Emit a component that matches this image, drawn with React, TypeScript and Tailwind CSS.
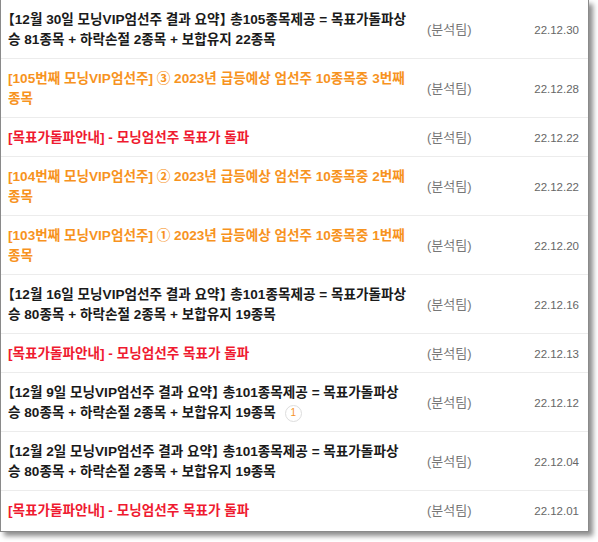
import React from "react";

type Row = {
  lines: string[];
  color: "black" | "orange" | "red";
  date: string;
  badge?: string;
};

const rows: Row[] = [
  { lines: ["【12월 30일 모닝VIP엄선주 결과 요약】 총105종목제공 = 목표가돌파상", "승 81종목 + 하락손절 2종목 + 보합유지 22종목"], color: "black", date: "22.12.30" },
  { lines: ["[105번째 모닝VIP엄선주] ③ 2023년 급등예상 엄선주 10종목중 3번째", "종목"], color: "orange", date: "22.12.28" },
  { lines: ["[목표가돌파안내] - 모닝엄선주 목표가 돌파"], color: "red", date: "22.12.22" },
  { lines: ["[104번째 모닝VIP엄선주] ② 2023년 급등예상 엄선주 10종목중 2번째", "종목"], color: "orange", date: "22.12.22" },
  { lines: ["[103번째 모닝VIP엄선주] ① 2023년 급등예상 엄선주 10종목중 1번째", "종목"], color: "orange", date: "22.12.20" },
  { lines: ["【12월 16일 모닝VIP엄선주 결과 요약】 총101종목제공 = 목표가돌파상", "승 80종목 + 하락손절 2종목 + 보합유지 19종목"], color: "black", date: "22.12.16" },
  { lines: ["[목표가돌파안내] - 모닝엄선주 목표가 돌파"], color: "red", date: "22.12.13" },
  { lines: ["【12월 9일 모닝VIP엄선주 결과 요약】 총101종목제공 = 목표가돌파상", "승 80종목 + 하락손절 2종목 + 보합유지 19종목"], color: "black", date: "22.12.12", badge: "1" },
  { lines: ["【12월 2일 모닝VIP엄선주 결과 요약】 총101종목제공 = 목표가돌파상", "승 80종목 + 하락손절 2종목 + 보합유지 19종목"], color: "black", date: "22.12.04" },
  { lines: ["[목표가돌파안내] - 모닝엄선주 목표가 돌파"], color: "red", date: "22.12.01" },
];

const colorClass = {
  black: "text-[#1a1a1a]",
  orange: "text-[#f7931e]",
  red: "text-[#ef1a30]",
};

function Line({ text }: { text: string }) {
  const parts = text.split(/([【】])/);
  return (
    <span>
      {parts.map((p, k) =>
        p === "【" || p === "】" ? (
          <span key={k} className="[font-feature-settings:'halt']">{p}</span>
        ) : (
          <React.Fragment key={k}>{p}</React.Fragment>
        )
      )}
    </span>
  );
}

export default function App() {
  return (
    <div className="w-[598px] h-[542px] bg-white" style={{ fontFamily: '"Liberation Sans", "Noto Sans CJK KR", sans-serif' }}>
      <div className="w-[589px] h-[532px] bg-white border-l border-r border-b border-[#8a8a8a] shadow-[4px_4px_5px_rgba(0,0,0,0.45)] overflow-hidden">
        {rows.map((r, i) => (
          <div key={i} className="flex items-center border-b border-[#ececec] pt-[10px] pb-[8px] last:border-b-0">
            <div className={`w-[422px] pl-[7px] pr-[4px] text-[13.6px] leading-[20px] font-bold ${colorClass[r.color]}`}>
              {r.lines.map((l, j) => (
                <div key={j} className="whitespace-nowrap flex items-center">
                  <Line text={l} />
                  {r.badge && j === r.lines.length - 1 && (
                    <span className="inline-flex items-center justify-center ml-[9px] w-[17px] h-[17px] rounded-full border border-[#dddddd] text-[10px] leading-none font-normal text-[#f7931e]">
                      {r.badge}
                    </span>
                  )}
                </div>
              ))}
            </div>
            <div className="w-[80px] pl-[4px] text-[13px] leading-[20px] text-[#777777] whitespace-nowrap">(분석팀)</div>
            <div className="flex-1 pr-[9px] text-right text-[11.5px] leading-[20px] text-[#666666]">{r.date}</div>
          </div>
        ))}
      </div>
    </div>
  );
}
